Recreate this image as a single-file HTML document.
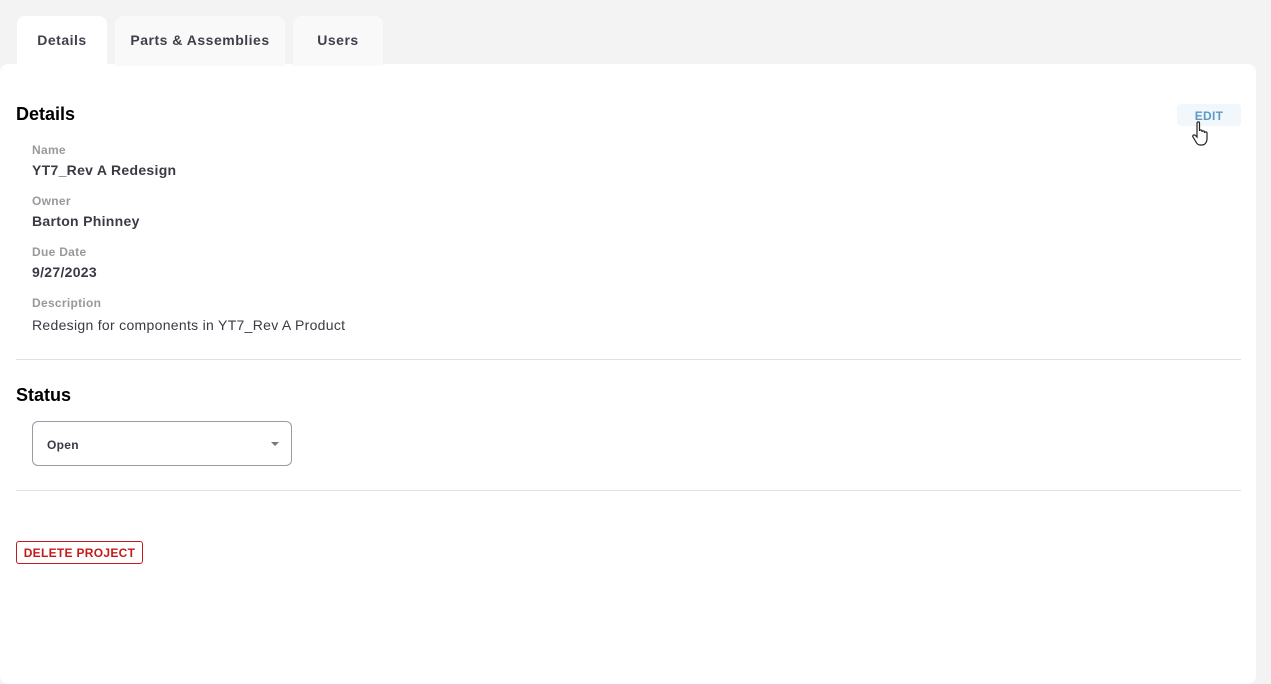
<!DOCTYPE html>
<html><head><style>
*{margin:0;padding:0;box-sizing:border-box}
body{width:1271px;height:664px;background:#f3f3f3;font-family:"Liberation Sans",sans-serif;position:relative;overflow:hidden;color:#333;letter-spacing:.3px}
.tab{position:absolute;top:16px;height:50px;border-radius:8px 8px 0 0;background:#f9f9f9;font-size:14px;font-weight:bold;color:#3f3f4a;text-align:center;line-height:48px;letter-spacing:.5px}
.card{position:absolute;left:0;top:64px;width:1256px;height:620px;background:#fff;border-radius:8px}
.abs{position:absolute}
h2{position:absolute;font-size:18px;font-weight:bold;color:#000;letter-spacing:0}
.lbl{position:absolute;left:32px;font-size:12px;font-weight:bold;color:#999}
.val{position:absolute;left:32px;font-size:14px;font-weight:bold;color:#3a3a44}
.hr{position:absolute;left:16px;width:1225px;height:1px;background:#e0e0e0}
</style></head><body>
<div class="card"></div>
<div class="tab" style="left:17px;width:90px;background:#fff">Details</div>
<div class="tab" style="left:115px;width:170px">Parts &amp; Assemblies</div>
<div class="tab" style="left:293px;width:90px">Users</div>
<h2 style="left:16px;top:104px">Details</h2>
<div class="abs" style="left:1177px;top:104px;width:64px;height:22px;background:#f2f7fb;border-radius:4px;color:#5b9ac8;font-size:12px;font-weight:bold;text-align:center;line-height:24px">EDIT</div>
<svg class="abs" style="left:1191px;top:121px" width="20" height="26" viewBox="0 0 20 26"><path d="M6 2c0-1.5 2.5-1.5 2.5 0v8c0-1.4 2.5-1.4 2.5 0v1c0-1.4 2.5-1.4 2.5 0v1c0-1.4 2.5-1.4 2.5 0v6c0 3-2 6-5 6H9c-2 0-3-1-4-3L2 16c-1-1.5 1-3 2.5-1.5L6 16z" fill="#fff" stroke="#222" stroke-width="1.2"/></svg>
<div class="lbl" style="top:143px">Name</div>
<div class="val" style="top:162px">YT7_Rev A Redesign</div>
<div class="lbl" style="top:194px">Owner</div>
<div class="val" style="top:213px">Barton Phinney</div>
<div class="lbl" style="top:245px">Due Date</div>
<div class="val" style="top:264px">9/27/2023</div>
<div class="lbl" style="top:296px">Description</div>
<div class="val" style="top:317px;font-weight:normal">Redesign for components in YT7_Rev A Product</div>
<div class="hr" style="top:359px"></div>
<h2 style="left:16px;top:385px">Status</h2>
<div class="abs" style="left:32px;top:421px;width:260px;height:45px;border:1px solid #9a9aa6;border-radius:6px"></div>
<div class="abs" style="left:47px;top:438px;font-size:12px;font-weight:bold;color:#3a3a44">Open</div>
<div class="abs" style="left:271px;top:442px;width:0;height:0;border-left:4px solid transparent;border-right:4px solid transparent;border-top:4px solid #777"></div>
<div class="hr" style="top:490px"></div>
<div class="abs" style="left:16px;top:541px;width:127px;height:23px;border:1px solid #c51a1a;border-radius:3px;color:#c51a1a;font-size:12px;font-weight:bold;text-align:center;line-height:22px;letter-spacing:.3px">DELETE PROJECT</div>
</body></html>
